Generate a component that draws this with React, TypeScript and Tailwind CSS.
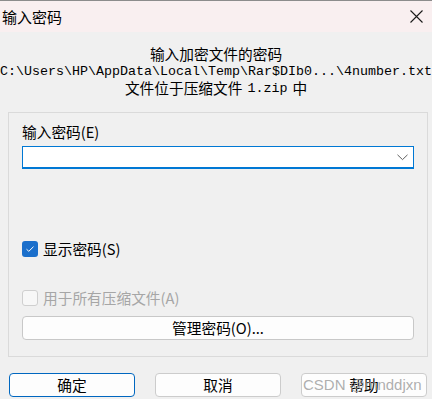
import React from 'react';

const cjk = '"Noto Sans CJK SC", "Liberation Sans", sans-serif';
const mono = '"Liberation Mono", "Noto Sans CJK SC", monospace';

function Check({ checked, disabled }: { checked?: boolean; disabled?: boolean }) {
  if (checked) {
    return (
      <span className="flex h-[16px] w-[16px] shrink-0 items-center justify-center rounded-[3px] bg-[#1b6fcb]">
        <svg width="10" height="8" viewBox="0 0 10 8" fill="none">
          <path d="M1.5 4.2 L3.8 6.3 L8.5 1.7" stroke="#ffffff" strokeWidth="1" />
        </svg>
      </span>
    );
  }
  return (
    <span
      className={`h-[16px] w-[16px] shrink-0 rounded-[3px] border ${disabled ? 'border-[#cfcfcf] bg-[#f7f7f7]' : 'border-[#8a8a8a] bg-white'}`}
    />
  );
}

export default function App() {
  return (
    <div
      className="relative flex h-[399px] w-[432px] flex-col overflow-hidden bg-[#f0f0f0] text-[#000]"
      style={{ fontFamily: cjk }}
    >
      <div className="flex h-[32px] shrink-0 items-center justify-between border-t border-[#8c8c8c] bg-[#f9eff0] pl-[2px] pr-[9px]">
        <span className="text-[15px] leading-none">输入密码</span>
        <svg width="13" height="13" viewBox="0 0 13 13" fill="none">
          <path d="M0.5 0.5 L12.5 12.5 M12.5 0.5 L0.5 12.5" stroke="#1a1a1a" strokeWidth="1.1" />
        </svg>
      </div>

      <div className="mt-[14px] flex h-[51px] shrink-0 flex-col items-center whitespace-nowrap">
        <div className="flex h-[17px] items-center text-[14.7px]">输入加密文件的密码</div>
        <div className="flex h-[17px] items-center text-[13.33px]" style={{ fontFamily: mono }}>
          C:\Users\HP\AppData\Local\Temp\Rar$DIb0...\4number.txt
        </div>
        <div className="flex h-[17px] items-center gap-[5px] text-[14.7px]">
          <span>文件位于压缩文件</span>
          <span style={{ fontFamily: mono }} className="text-[13.33px]">1.zip</span>
          <span>中</span>
        </div>
      </div>

      <div className="ml-[8px] mt-[15px] flex h-[245px] w-[420px] shrink-0 flex-col border border-[#dadada] px-[13px] pt-[10px]">
        <div className="flex h-[18px] items-center text-[14.7px]">输入密码(E)</div>
        <div className="mt-[5px] flex h-[23px] items-center justify-end border border-b-2 border-[#0078d4] bg-white pr-[5px]">
          <svg width="11" height="7" viewBox="0 0 11 7" fill="none">
            <path d="M0.5 0.8 L5.5 5.6 L10.5 0.8" stroke="#606060" strokeWidth="1" />
          </svg>
        </div>
        <label className="mt-[72px] flex h-[16px] items-center gap-[5px]">
          <Check checked />
          <span className="text-[14.7px] leading-[16px]">显示密码(S)</span>
        </label>
        <label className="mt-[33px] flex h-[16px] items-center gap-[5px]">
          <Check disabled />
          <span className="text-[14.7px] leading-[16px] text-[#a6a6a6]">用于所有压缩文件(A)</span>
        </label>
        <button className="mt-[10px] flex h-[24px] items-center justify-center rounded-[4px] border border-[#c8c8c8] bg-[#fdfdfd] text-[14.7px]">
          管理密码(O)...
        </button>
      </div>

      <div className="mt-[16px] flex gap-[20px] pl-[9px]">
        <button className="flex h-[24px] w-[126px] shrink-0 items-center justify-center rounded-[4px] border border-[#0067c0] bg-[#fdfdfd] text-[14.7px]">
          确定
        </button>
        <button className="flex h-[24px] w-[126px] shrink-0 items-center justify-center rounded-[4px] border border-[#cccccc] bg-[#fdfdfd] text-[14.7px]">
          取消
        </button>
        <button className="relative flex h-[24px] w-[126px] shrink-0 items-center justify-center rounded-[4px] border border-[#cccccc] bg-[#fdfdfd] text-[14.7px]">
          帮助
          <span
            className="pointer-events-none absolute left-[1px] top-[2px] text-[15px] leading-[18px] text-[#9a9a9a]/80"
            style={{ fontFamily: '"Liberation Sans", Arial, sans-serif' }}
          >
            CSDN @mnddjxn
          </span>
        </button>
      </div>
    </div>
  );
}
